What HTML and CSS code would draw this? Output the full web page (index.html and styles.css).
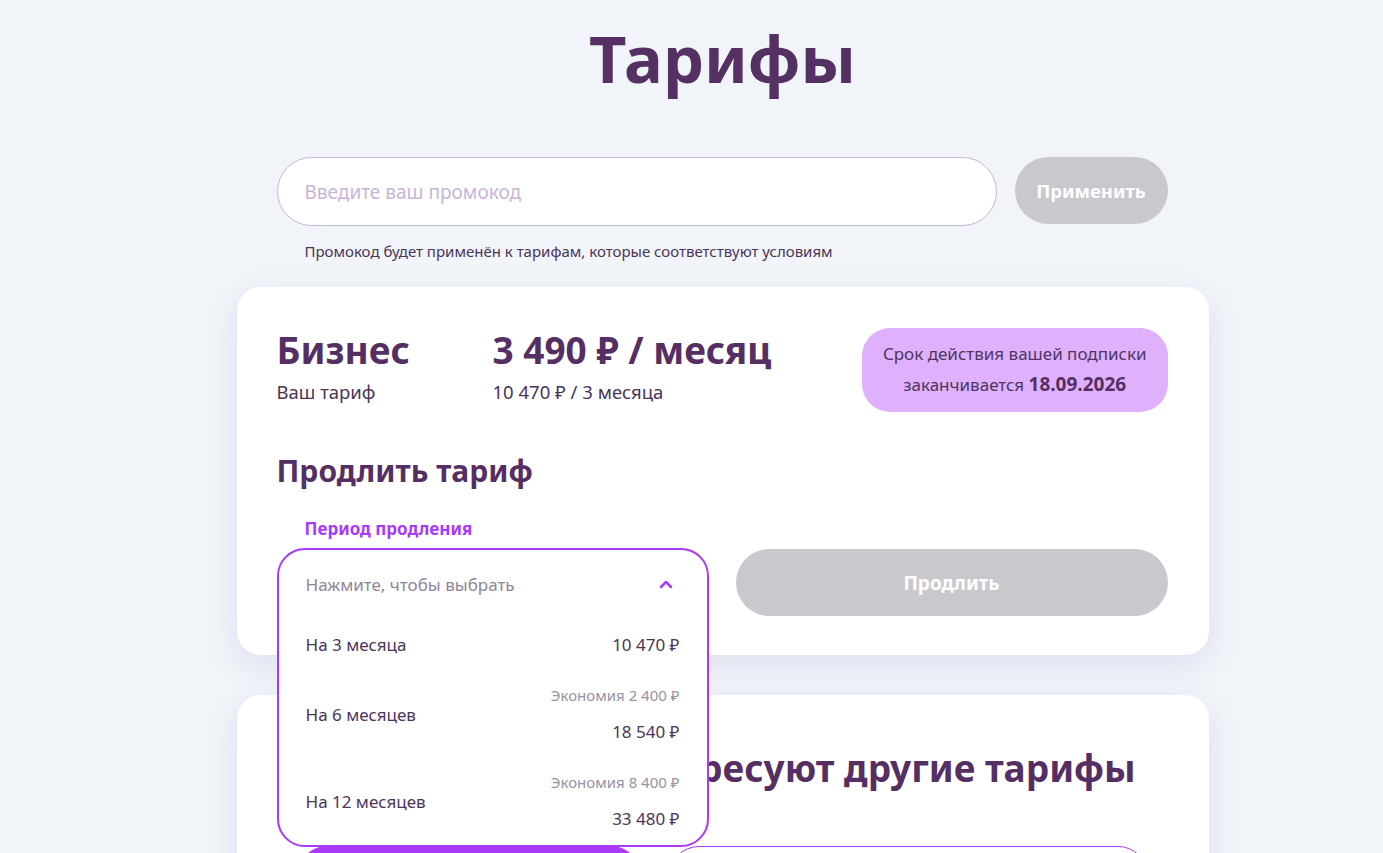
FILE: index.html
```html
<!DOCTYPE html>
<html lang="ru">
  <head>
    <meta charset="UTF-8" />
    <meta name="viewport" content="width=device-width, initial-scale=1.0" />
    <title>Тарифы</title>
    <link rel="stylesheet" href="styles.css">
  </head>
  <body>
    <main class="page">
      <h1 class="page_title">Тарифы</h1>

      <form class="promo">
        <div class="promo_row">
          <input class="promo_input" type="text" placeholder="Введите ваш промокод" />
          <button class="promo_btn" type="button" disabled>Применить</button>
        </div>
        <p class="promo_hint">Промокод будет применён к тарифам, которые соответствуют условиям</p>
      </form>

      <!-- текущий тариф -->
      <section class="card">
        <div class="current">
          <div class="current_name">
            <h2 class="plan_title">Бизнес</h2>
            <p class="plan_sub">Ваш тариф</p>
          </div>
          <div class="current_price">
            <h2 class="plan_title">3 490 ₽ / месяц</h2>
            <p class="plan_sub">10 470 ₽ / 3 месяца</p>
          </div>
          <div class="expire_badge">
            Срок действия вашей подписки<br />заканчивается <b>18.09.2026</b>
          </div>
        </div>

        <h3 class="extend_title">Продлить тариф</h3>
        <div class="extend_label">Период продления</div>
        <div class="extend_row">
          <div class="period_select">
            <div class="period_box">
              <div class="period_head">
                <span>Нажмите, чтобы выбрать</span>
                <svg class="chevron" width="14" height="9" viewBox="0 0 14 9">
                  <path d="M2 7 L7 2 L12 7" fill="none" stroke="#a93af8" stroke-width="2.5" stroke-linecap="round" stroke-linejoin="round" />
                </svg>
              </div>
              <ul class="period_list">
                <li class="period_item">
                  <span>На 3 месяца</span>
                  <span class="period_right"><span class="period_price">10 470 ₽</span></span>
                </li>
                <li class="period_item">
                  <span>На 6 месяцев</span>
                  <span class="period_right">
                    <span class="period_save">Экономия 2 400 ₽</span>
                    <span class="period_price">18 540 ₽</span>
                  </span>
                </li>
                <li class="period_item">
                  <span>На 12 месяцев</span>
                  <span class="period_right">
                    <span class="period_save">Экономия 8 400 ₽</span>
                    <span class="period_price">33 480 ₽</span>
                  </span>
                </li>
              </ul>
            </div>
          </div>
          <button class="extend_btn" type="button" disabled>Продлить</button>
        </div>
      </section>

      <!-- другие тарифы -->
      <section class="card card_other">
        <h2 class="other_title">Возможно, вас заинтересуют другие тарифы</h2>
        <div class="period_tabs">
          <button class="tab tab_active" type="button">Помесячно</button>
          <button class="tab" type="button">На 3 месяца</button>
        </div>
      </section>
    </main>
  </body>
</html>
```

FILE: styles.css
```css
* {
  margin: 0;
  padding: 0;
  box-sizing: border-box;
  list-style-type: none;
  text-decoration: none;
}

body {
  padding-left: 62px;
  background-color: #f1f4f8;
  font-family: 'Noto Sans', 'Open Sans', sans-serif;
  color: #552f63;
}

.page {
  width: 972px;
  margin: 0 auto;
  padding-bottom: 60px;
}

.page_title {
  padding-top: 18px;
  text-align: center;
  font-size: 65px;
  line-height: 80px;
  font-weight: 700;
  color: #553062;
}

/* промокод */
.promo {
  margin-top: 59px;
  padding: 0 41px 0 40px;
}
.promo_row {
  display: flex;
  gap: 18px;
  align-items: flex-start;
}
.promo_input {
  flex: 1;
  height: 69px;
  padding: 0 27px;
  border: 1px solid #c5b6d6;
  border-radius: 35px;
  background: white;
  font-family: inherit;
  font-size: 19px;
  color: #552f63;
  outline: none;

  &::placeholder {
    color: #c8b4d8;
  }
}
.promo_btn {
  width: 153px;
  height: 67px;
  border: none;
  border-radius: 34px;
  background-color: #cac8cf;
  font-family: inherit;
  font-size: 18.5px;
  font-weight: 700;
  color: white;
}
.promo_hint {
  margin-top: 15px;
  padding-left: 28px;
  font-size: 15px;
  line-height: 20px;
  color: #4a3458;
}

/* карточки */
.card {
  margin-top: 26px;
  padding: 40px 41px 39px 40px;
  border-radius: 24px;
  background-color: white;
  box-shadow: 0 10px 32px rgba(96, 92, 190, 0.13);
}

.current {
  display: flex;
  align-items: flex-start;
}
.current_name {
  width: 216px;
}
.current_price {
  flex: 1;
}
.plan_title {
  font-size: 37px;
  line-height: 46px;
  font-weight: 700;
  white-space: nowrap;
}
.plan_sub {
  margin-top: 7px;
  font-size: 18.5px;
  line-height: 24px;
  color: #4a3458;
}
.expire_badge {
  margin-top: 1px;
  padding: 11px 21px 12px;
  border-radius: 28px;
  background-color: #dfb1fd;
  text-align: center;
  font-size: 17px;
  line-height: 30px;
  color: #4f3560;

  & b {
    font-size: 19px;
    font-weight: 700;
    color: #552f63;
  }
}

.extend_title {
  margin-top: 39px;
  font-size: 30px;
  line-height: 40px;
  font-weight: 700;
}
.extend_label {
  margin-top: 27px;
  padding-left: 28px;
  font-size: 17px;
  line-height: 22px;
  font-weight: 700;
  color: #a93af8;
}
.extend_row {
  display: grid;
  grid-template-columns: 1fr 1fr;
  gap: 27px;
  margin-top: 8px;
  height: 68px;
}

/* выпадающий список */
.period_select {
  position: relative;
}
.period_box {
  position: absolute;
  top: 0;
  left: 0;
  right: 0;
  z-index: 5;
  border: 2px solid #a93af8;
  border-radius: 28px;
  background-color: white;
}
.period_head {
  display: flex;
  justify-content: space-between;
  align-items: center;
  height: 69px;
  padding: 0 34px 0 27px;
  font-size: 17px;
  color: #8e8699;
}
.chevron {
  display: block;
}
.period_item {
  display: flex;
  justify-content: space-between;
  align-items: center;
  padding: 14px 27px;
  font-size: 17px;
  line-height: 24px;
  color: #4b3558;
}
.period_right {
  display: flex;
  flex-direction: column;
  align-items: flex-end;
}
.period_save {
  margin-bottom: 15px;
  font-size: 15px;
  line-height: 20px;
  color: #9a90a3;
}

.extend_btn {
  height: 67px;
  margin-top: 1px;
  border: none;
  border-radius: 34px;
  background-color: #cac8cf;
  font-family: inherit;
  font-size: 19px;
  font-weight: 700;
  color: white;
}

/* другие тарифы */
.card_other {
  margin-top: 40px;
  padding-top: 50px;
  height: 400px;
}
.other_title {
  font-size: 37px;
  line-height: 46px;
  font-weight: 700;
  white-space: nowrap;
}
.period_tabs {
  display: flex;
  gap: 28px;
  margin-top: 55px;
  padding: 0 20px;
}
.tab {
  height: 60px;
  border: 1px solid #a93af8;
  border-radius: 30px;
  background: white;
  font-family: inherit;
  font-size: 17px;
  font-weight: 700;
  color: #a93af8;
  flex: 1;
}
.tab_active {
  flex: 0 0 344px;
  background-color: #a93af8;
  color: white;
}
```
